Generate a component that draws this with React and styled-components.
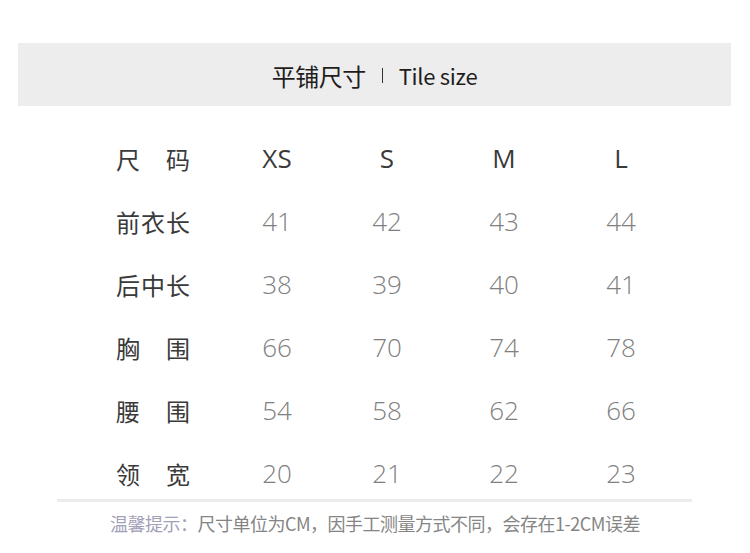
import styled, { createGlobalStyle } from 'styled-components'

const GlobalStyle = createGlobalStyle`
  body {
    margin: 0;
    background: #fff;
    font-family: "Noto Sans CJK SC", "Noto Sans", sans-serif;
  }
`

const sizes = ['XS', 'S', 'M', 'L']

const rows = [
  { label: ['尺', '码'], values: sizes, head: true },
  { label: ['前', '衣', '长'], values: [41, 42, 43, 44] },
  { label: ['后', '中', '长'], values: [38, 39, 40, 41] },
  { label: ['胸', '围'], values: [66, 70, 74, 78] },
  { label: ['腰', '围'], values: [54, 58, 62, 66] },
  { label: ['领', '宽'], values: [20, 21, 22, 23] },
]

function App() {
  return (
    <Page>
      <GlobalStyle />
      <TitleBar>
        <TitleCn>平铺尺寸</TitleCn>
        <Divider />
        <TitleEn>Tile size</TitleEn>
      </TitleBar>
      <Table>
        {rows.map((row, i) => (
          <Row key={i}>
            <Label>
              {row.label.map((ch) => (
                <span key={ch}>{ch}</span>
              ))}
            </Label>
            {row.values.map((v, j) => (
              <Cell key={j} head={row.head}>{v}</Cell>
            ))}
          </Row>
        ))}
      </Table>
      <Rule />
      <Note>
        <NoteLead>温馨提示：</NoteLead>尺寸单位为CM，因手工测量方式不同，会存在1-2CM误差
      </Note>
    </Page>
  )
}

const Page = styled.div`
  width: 750px;
  height: 553px;
  padding-top: 43px;
  box-sizing: border-box;
  overflow: hidden;
`

const TitleBar = styled.div`
  margin-left: 18px;
  width: 713px;
  height: 63px;
  background: #ededed;
  display: flex;
  align-items: center;
  justify-content: center;
  padding-top: 1px;
  box-sizing: border-box;
  color: #1e1e1e;
`

const TitleCn = styled.span`
  font-size: 24px;
  letter-spacing: -0.5px;
`

const Divider = styled.span`
  width: 1px;
  height: 15px;
  background: #333;
  margin: 0 16px;
`

const TitleEn = styled.span`
  font-size: 22px;
  letter-spacing: -0.3px;
`

const Table = styled.div`
  padding: 28px 0 0 116px;
  display: flex;
  flex-direction: column;
  gap: 15px;
`

const Row = styled.div`
  display: grid;
  grid-template-columns: 104px 114px 106px 128px 106px;
  height: 48px;
  align-items: center;
`

const Label = styled.div`
  width: 74px;
  display: flex;
  justify-content: space-between;
  font-size: 24px;
  color: #3a3a3a;
`

const Cell = styled.div`
  text-align: center;
  font-family: "Open Sans", "Noto Sans", sans-serif;
  font-weight: ${(p) => (p.head ? 400 : 300)};
  font-size: 26px;
  color: ${(p) => (p.head ? '#3a3a3a' : '#808080')};
`

const Rule = styled.div`
  margin-top: 2px;
  margin-left: 57px;
  width: 635px;
  height: 3px;
  background: #ececec;
`

const Note = styled.div`
  padding: 10px 0 0 110px;
  font-size: 18px;
  line-height: 22px;
  color: #858585;
  letter-spacing: -0.5px;
`

const NoteLead = styled.span`
  color: #a29fb8;
`

export default App
